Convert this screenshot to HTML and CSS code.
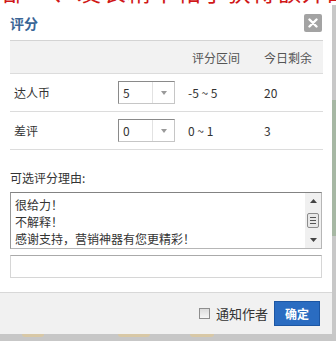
FILE: index.html
```html
<!DOCTYPE html>
<html lang="zh-CN">
<head>
    <meta charset="UTF-8">
    <title>评分</title>
    <link rel="stylesheet" href="styles.css">
</head>
<body>
    <div class="page">
        <div class="backdrop-top">
            <div class="headline">部一、发表精华帖子获得额外的奖励</div>
        </div>
        <div class="middle">
            <div class="dialog">
                <div class="dialog-head">
                    <h2>评分</h2>
                    <button class="close" type="button" aria-label="关闭">
                        <svg width="10" height="10" viewBox="0 0 10 10">
                            <path d="M1.5 1.5 L8.5 8.5 M8.5 1.5 L1.5 8.5" stroke="#fff" stroke-width="2.4" stroke-linecap="round"/>
                        </svg>
                    </button>
                </div>

                <div class="rate-table">
                    <div class="row head">
                        <div></div>
                        <div></div>
                        <div>评分区间</div>
                        <div>今日剩余</div>
                    </div>
                    <div class="row">
                        <div>达人币</div>
                        <div>
                            <div class="select">
                                <span class="val">5</span>
                                <span class="arrow"></span>
                            </div>
                        </div>
                        <div>-5 ~ 5</div>
                        <div>20</div>
                    </div>
                    <div class="row">
                        <div>差评</div>
                        <div>
                            <div class="select">
                                <span class="val">0</span>
                                <span class="arrow"></span>
                            </div>
                        </div>
                        <div>0 ~ 1</div>
                        <div>3</div>
                    </div>
                </div>

                <div class="reason-label">可选评分理由:</div>
                <div class="listbox">
                    <ul class="options">
                        <li>很给力！</li>
                        <li>不解释！</li>
                        <li>感谢支持，营销神器有您更精彩！</li>
                    </ul>
                    <div class="scrollbar">
                        <svg class="sb-arrow" width="7" height="4" viewBox="0 0 7 4"><path d="M0 4 L3.5 0 L7 4 Z" fill="#444"/></svg>
                        <div class="thumb">
                            <span></span><span></span><span></span>
                        </div>
                        <svg class="sb-arrow" width="7" height="4" viewBox="0 0 7 4"><path d="M0 0 L3.5 4 L7 0 Z" fill="#444"/></svg>
                    </div>
                </div>
                <div class="reason-input"></div>

                <div class="dialog-foot">
                    <label class="notify"><span class="check"></span>通知作者</label>
                    <button class="ok" type="button">确定</button>
                </div>
            </div>
            <div class="backdrop-side">
                <div class="green"></div>
            </div>
        </div>
        <div class="backdrop-bottom">
            <span class="blob b1"></span>
            <span class="blob b2"></span>
            <span class="blob b3"></span>
        </div>
    </div>
</body>
</html>
```

FILE: styles.css
```css
* {
    margin: 0;
    padding: 0;
    box-sizing: border-box;
}

body {
    background-color: #c9c9c9;
    font-family: "Noto Sans CJK SC", "Liberation Sans", sans-serif;
    font-size: 12px;
    color: #333;
}

.page {
    width: 336px;
    height: 341px;
    display: flex;
    flex-direction: column;
    overflow: hidden;
}

/* page behind the dialog: only the bottom of a red headline shows */
.backdrop-top {
    flex: 0 0 5px;
    height: 5px;
    background-color: #fff;
    overflow: hidden;
    padding-left: 2px;
}

.headline {
    height: 26px;
    margin-top: -22px;
    font-size: 24px;
    line-height: 26px;
    color: #d01818;
    white-space: nowrap;
    letter-spacing: 1px;
}

.middle {
    display: flex;
    flex: 0 0 329px;
    height: 329px;
    position: relative;
    z-index: 1;
}

.dialog {
    width: 332px;
    background-color: #fff;
    display: flex;
    flex-direction: column;
}

.dialog-head {
    height: 35px;
    display: flex;
    align-items: center;
    justify-content: space-between;
    padding: 0 10px 0 10px;
    background-color: #fff;
}

.dialog-head h2 {
    font-size: 14px;
    font-weight: bold;
    color: #3a6596;
}

.close {
    width: 18px;
    height: 18px;
    border: none;
    border-radius: 2px;
    background-color: #a3a3a3;
    display: flex;
    align-items: center;
    justify-content: center;
}

.rate-table {
    margin: 0 9px 0 10px;
    border-top: 1px solid #d4d4d4;
}

.row {
    display: grid;
    grid-template-columns: 104px 70px 76px 1fr;
    align-items: center;
    height: 38px;
    border-bottom: 1px solid #dcdcdc;
    padding-left: 4px;
}

.row.head {
    height: 33px;
    background-color: #f2f2f2;
    color: #555;
}

.row.head div:nth-child(3) {
    padding-left: 4px;
}

.select {
    width: 57px;
    height: 23px;
    display: flex;
    border: 1px solid #c6c6c6;
    border-top-color: #8a8a8a;
    border-left-color: #8a8a8a;
    background-color: #fff;
}

.select .val {
    width: 34px;
    padding-left: 4px;
    line-height: 21px;
    border-right: 1px solid #e2e2e2;
}

.select .arrow {
    flex: 1;
    display: flex;
    align-items: center;
    justify-content: center;
}

.select .arrow::after {
    content: "";
    border-left: 3.5px solid transparent;
    border-right: 3.5px solid transparent;
    border-top: 4px solid #9a9a9a;
}

.reason-label {
    margin: 20px 0 0 10px;
    height: 22px;
    line-height: 16px;
}

.listbox {
    margin: 0 10px 0 10px;
    height: 57px;
    display: flex;
    border: 1px solid #b6b6b6;
    border-top-color: #838383;
    border-left-color: #979797;
}

.options {
    flex: 1;
    list-style: none;
    padding: 3px 0 0 4px;
    line-height: 17px;
}

.scrollbar {
    width: 16px;
    background-color: #f0f0f0;
    display: flex;
    flex-direction: column;
    align-items: center;
    justify-content: space-between;
    padding: 6px 0 6px;
}

.thumb {
    width: 12px;
    height: 15px;
    border: 1px solid #8c8c8c;
    border-radius: 2px;
    background-color: #e8e8e8;
    display: flex;
    flex-direction: column;
    justify-content: center;
    gap: 2px;
    padding: 0 2px;
}

.thumb span {
    height: 1px;
    background-color: #555;
}

.reason-input {
    margin: 6px 10px 0 10px;
    height: 23px;
    border: 1px solid #d6d6d6;
    border-top-color: #aaa;
}

.dialog-foot {
    margin-top: 14px;
    flex: 1;
    background-color: #f1f1f1;
    border-top: 1px solid #d8d8d8;
    display: flex;
    align-items: center;
    justify-content: flex-end;
    padding: 0 12px 0 0;
    gap: 6px;
}

.notify {
    display: flex;
    align-items: center;
    gap: 6px;
    font-size: 13px;
    color: #333;
}

.check {
    width: 11px;
    height: 11px;
    border: 1px solid #8e8e8e;
    background: linear-gradient(#dcdcdc, #f6f6f6);
}

.ok {
    width: 46px;
    height: 25px;
    border: 1px solid #1c56a3;
    background-color: #2a6cc1;
    color: #fff;
    font-family: "Noto Sans CJK SC", sans-serif;
    font-size: 12px;
    font-weight: bold;
}

.backdrop-side {
    flex: 1;
    background-color: #c8c8c8;
    padding-top: 95px;
}

.backdrop-side .green {
    height: 136px;
    background-color: #a7b8a4;
}

.backdrop-bottom {
    flex: 1;
    position: relative;
    background-color: #c7c7c7;
}

.blob {
    position: absolute;
    top: 0;
    height: 3px;
    border-radius: 0 0 6px 6px;
    background-color: #d8c8a6;
}

.b1 { left: 22px; width: 22px; }
.b2 { left: 118px; width: 32px; }
.b3 { left: 190px; width: 24px; }
```
